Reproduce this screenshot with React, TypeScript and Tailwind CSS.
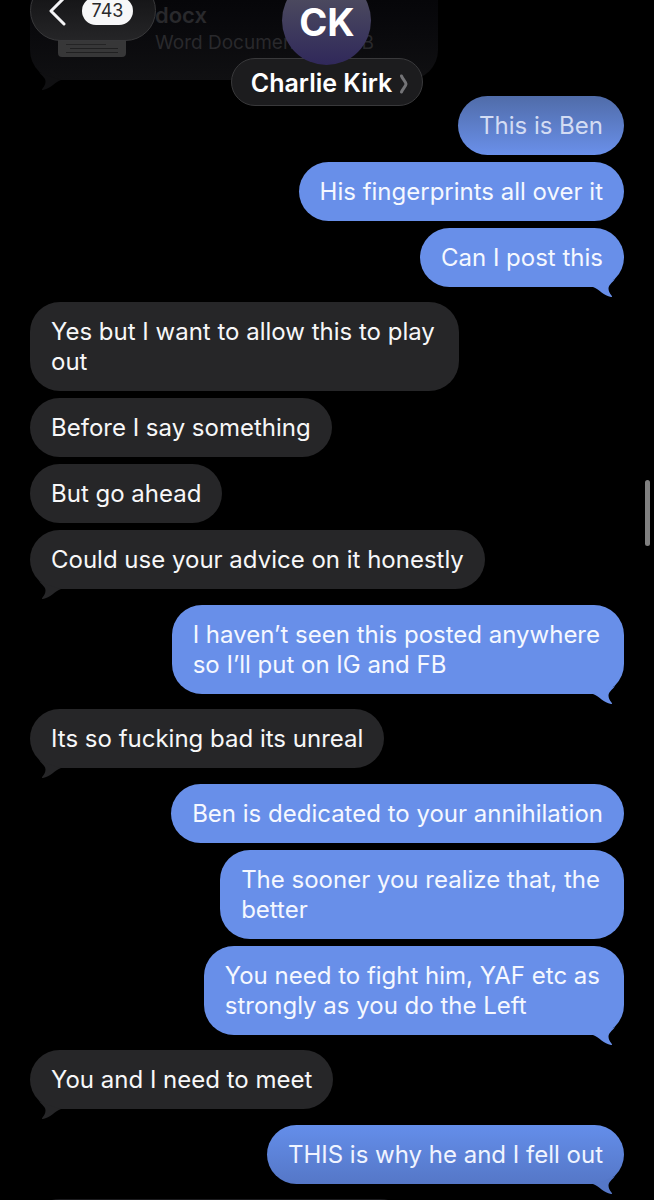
import clsx from "clsx";

type Message = {
  text: string;
  sent?: boolean;
  first?: boolean; // first bubble of a run
  tail?: boolean;
  tone?: "top" | "bottom";
};

const messages: Message[] = [
  { text: "This is Ben", sent: true, first: true, tone: "top" },
  { text: "His fingerprints all over it", sent: true },
  { text: "Can I post this", sent: true, tail: true },
  { text: "Yes but I want to allow this to play\nout", first: true },
  { text: "Before I say something" },
  { text: "But go ahead" },
  { text: "Could use your advice on it honestly", tail: true },
  {
    text: "I haven’t seen this posted anywhere\nso I’ll put on IG and FB",
    sent: true,
    first: true,
    tail: true,
  },
  { text: "Its so fucking bad its unreal", first: true, tail: true },
  { text: "Ben is dedicated to your annihilation", sent: true, first: true },
  { text: "The sooner you realize that, the\nbetter", sent: true },
  {
    text: "You need to fight him, YAF etc as\nstrongly as you do the Left",
    sent: true,
    tail: true,
  },
  { text: "You and I need to meet", first: true, tail: true },
  {
    text: "THIS is why he and I fell out",
    sent: true,
    first: true,
    tail: true,
    tone: "bottom",
  },
];

export default function App() {
  return (
    <div className="relative h-screen overflow-hidden bg-black font-['Inter','Liberation_Sans',sans-serif] text-white">
      <Header />
      <main className="px-[30px]">
        <Attachment />
        <ul className="flex flex-col">
          {messages.map((message) => (
            <Bubble key={message.text} {...message} />
          ))}
          <li
            aria-hidden="true"
            className="mt-[15px] h-[59px] w-[380px] self-start rounded-[30px] bg-[#1c1c1f]"
          />
        </ul>
      </main>
      <div className="absolute top-2/5 right-1 h-[66px] w-[5px] rounded-full bg-[#808080]" />
    </div>
  );
}

const Header = () => (
  <header className="absolute inset-x-0 -top-6 z-10 grid grid-cols-[1fr_auto_1fr] items-start px-[30px]">
    <button
      type="button"
      aria-label="Back, 743 unread"
      className="mt-1 flex h-[61px] w-[126px] items-center gap-4 rounded-full border border-[#38383a] bg-linear-to-b from-[#101012] to-[#252527] pl-[18px]"
    >
      <svg width="17" height="30" viewBox="0 0 17 30" fill="none">
        <path
          d="M15 2 2 15l13 13"
          stroke="#f4f4f6"
          strokeWidth="3"
          strokeLinecap="round"
          strokeLinejoin="round"
        />
      </svg>
      <span className="flex h-[28px] w-[51px] items-center justify-center rounded-full bg-[#f7f7f8] text-[18px] text-[#29292b]">
        743
      </span>
    </button>
    <div className="flex flex-col items-center">
      <div className="z-10 flex size-[89px] items-center justify-center rounded-full bg-linear-to-b from-[#56545f] to-[#30285a] pt-[3px] text-[38px] font-bold">
        CK
      </div>
      <button
        type="button"
        className="-mt-[7px] flex h-12 items-center gap-2 rounded-full border border-[#39393b] bg-[#1c1c1e] pt-[3px] pr-[14px] pl-[19px] text-[25px] font-semibold"
      >
        Charlie Kirk
        <svg width="8" height="20" viewBox="0 0 8 20" fill="none">
          <path
            d="M1.5 2C2.5 5 6 8 6 10s-3.5 5-4.5 8"
            stroke="#747477"
            strokeWidth="3"
            strokeLinecap="round"
          />
        </svg>
      </button>
    </div>
  </header>
);

const Attachment = () => (
  <div className="relative flex h-20 w-[408px] rounded-b-[30px] bg-linear-to-b from-[#060609] to-[#101012] pl-7">
    <div className="flex h-[57px] w-[68px] flex-col justify-end gap-[3px] rounded-b-sm bg-[#373738] px-2 pb-1">
      <div className="h-px bg-[#242425]" />
      <div className="mr-3 h-px bg-[#242425]" />
      <div className="ml-1 h-px bg-[#202021]" />
      <div className="h-px bg-[#202021]" />
    </div>
    <div className="ml-[29px] text-[#29292c]">
      <p className="text-[22px] leading-[30px] font-semibold">docx</p>
      <p className="flex gap-[10px] text-[19px] leading-[26px]">
        <span>Word Document</span>
        <span>· 78 KB</span>
      </p>
    </div>
    <Tail className="text-[#101012]" />
  </div>
);

const Bubble: React.FC<Message> = ({ text, sent, first, tail, tone }) => (
  <li
    className={clsx(
      "relative rounded-[30px] pt-[15px] pb-[14px] pl-[21px] text-[24px] leading-[30px] whitespace-pre",
      text.includes("\n") ? "pr-[24px]" : "pr-[21px]",
      sent ? "self-end" : "self-start bg-[#262628] text-[#f7f7f8]",
      first ? (sent ? "mt-[16px]" : "mt-[15px]") : "mt-[7px]",
      sent && !tone && "bg-[#688fe9] text-[#f5f8ff]",
      tone === "top" &&
        "bg-linear-to-b from-[#506ca9] to-[#6a90ea] text-[#d3dcf3]",
      tone === "bottom" &&
        "bg-linear-to-b from-[#648eea] to-[#5577c7] text-[#f0f4ff]",
    )}
  >
    {text}
    {tail && (
      <Tail
        sent={sent}
        className={
          tone === "bottom"
            ? "text-[#5577c7]"
            : sent
              ? "text-[#688fe9]"
              : "text-[#262628]"
        }
      />
    )}
  </li>
);

const Tail: React.FC<{ sent?: boolean; className: string }> = ({
  sent,
  className,
}) => (
  <svg
    width="32"
    height="20"
    viewBox="0 0 32 20"
    fill="currentColor"
    aria-hidden="true"
    className={clsx(
      "absolute -bottom-[10px]",
      sent ? "right-0" : "left-0 -scale-x-100",
      className,
    )}
  >
    <path d="M1 10C7 12 12 19 19 20C20 20 20.5 19.5 19.5 18.5C17.5 16 16.5 14 16.5 11.5C16.5 8 20 6 23 2L14 6Z" />
  </svg>
);
